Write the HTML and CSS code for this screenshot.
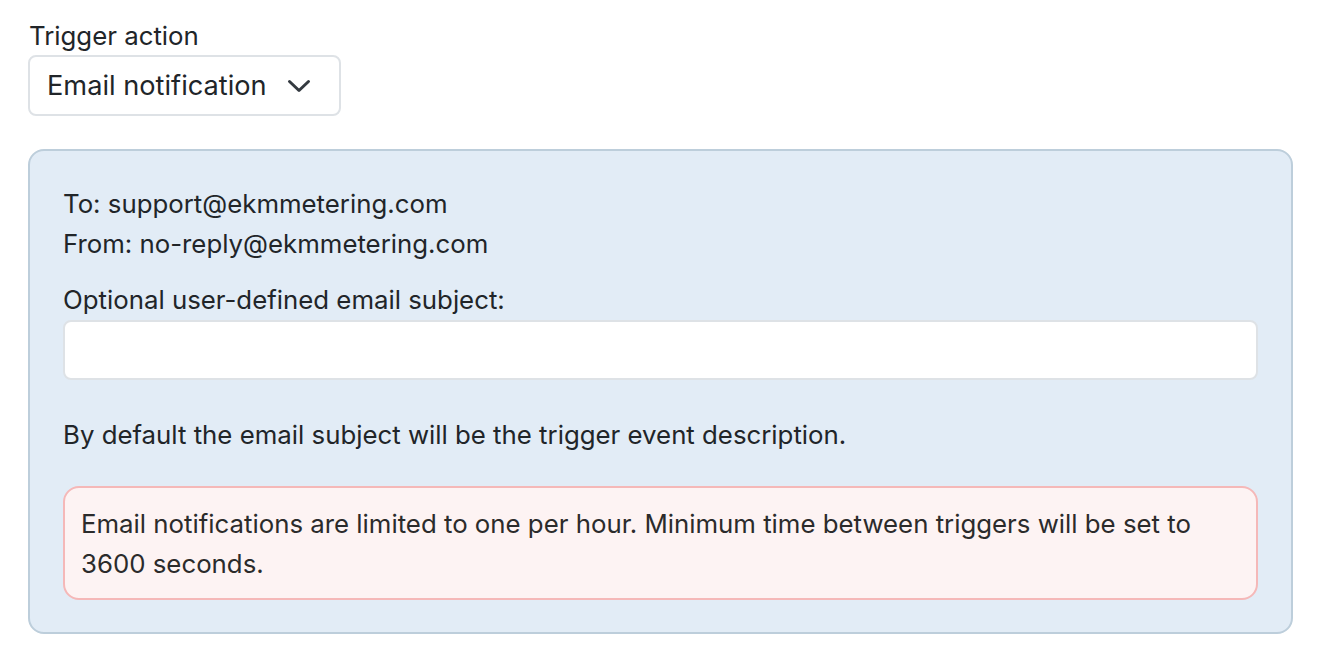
FILE: index.html
```html
<!DOCTYPE html>
<html>
<head>
<meta charset="utf-8">
<link rel="stylesheet" href="styles.css">
</head>
<body>
<div class="page">
  <label class="field-label">Trigger action</label>
  <div class="select">
    <span class="select-text">Email notification</span>
    <svg class="chevron" width="24" height="14" viewBox="0 0 24 14"><path d="M2.5 2.5 L12 11.5 L21.5 2.5" fill="none" stroke="#343a40" stroke-width="3" stroke-linecap="round" stroke-linejoin="round"/></svg>
  </div>
  <div class="panel">
    <div class="line">To: support@ekmmetering.com</div>
    <div class="line">From: no-reply@ekmmetering.com</div>
    <div class="line subject-label">Optional user-defined email subject:</div>
    <div class="input"></div>
    <div class="line hint">By default the email subject will be the trigger event description.</div>
    <div class="alert">Email notifications are limited to one per hour. Minimum time between triggers will be set to 3600 seconds.</div>
  </div>
</div>
</body>
</html>
```
FILE: styles.css
```css
html, body {
  margin: 0;
  padding: 0;
  background: #ffffff;
}
body {
  font-family: Inter, "Noto Sans", sans-serif;
  color: #212529;
  font-size: 25.8px;
}
.page {
  padding: 17px 25px 0 28px;
  display: flex;
  flex-direction: column;
  align-items: flex-start;
}
.field-label {
  display: block;
  line-height: 38px;
  padding-left: 1px;
}
.select {
  box-sizing: border-box;
  width: 313px;
  height: 61px;
  border: 2px solid #dee2e6;
  border-radius: 8px;
  display: flex;
  align-items: center;
  padding: 0 28px 0 17px;
  justify-content: space-between;
  font-size: 27.2px;
}
.chevron {
  display: block;
}
.panel {
  box-sizing: border-box;
  align-self: stretch;
  margin-top: 33px;
  width: 1265px;
  border: 2px solid #bdcedb;
  border-radius: 16px;
  background: #e2ecf6;
  padding: 33px 33px 32px 33px;
}
.line {
  line-height: 40px;
}
.subject-label {
  margin-top: 16px;
}
.input {
  box-sizing: border-box;
  height: 60px;
  background: #ffffff;
  border: 2px solid #dee2e6;
  border-radius: 8px;
}
.hint {
  margin-top: 35px;
}
.alert {
  margin-top: 31px;
  border: 2px solid #f5b8b8;
  background: #fdf3f3;
  border-radius: 16px;
  padding: 16px 16px 14px 16px;
  line-height: 40px;
  color: #2b2b2b;
}
```
